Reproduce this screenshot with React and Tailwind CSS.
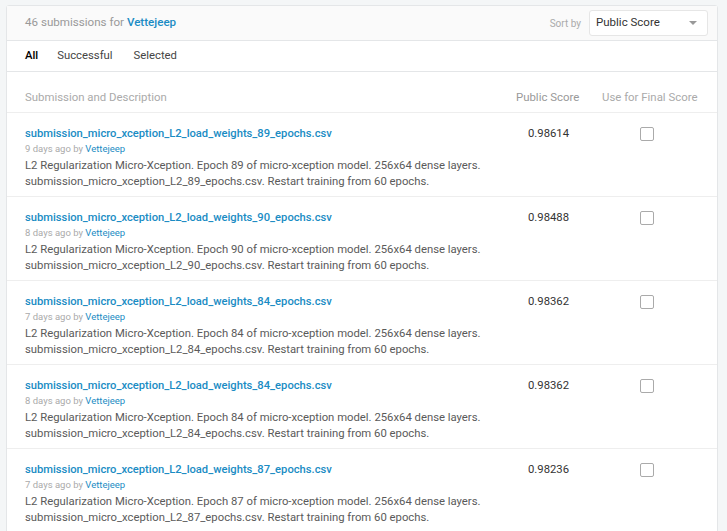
const rows = [
  { file: "submission_micro_xception_L2_load_weights_89_epochs.csv", ago: "9 days ago", epoch: 89, score: "0.98614" },
  { file: "submission_micro_xception_L2_load_weights_90_epochs.csv", ago: "8 days ago", epoch: 90, score: "0.98488" },
  { file: "submission_micro_xception_L2_load_weights_84_epochs.csv", ago: "7 days ago", epoch: 84, score: "0.98362" },
  { file: "submission_micro_xception_L2_load_weights_84_epochs.csv", ago: "8 days ago", epoch: 84, score: "0.98362" },
  { file: "submission_micro_xception_L2_load_weights_87_epochs.csv", ago: "7 days ago", epoch: 87, score: "0.98236" },
];

const App = () => {
  return (
    <div className="h-[531px] bg-[#f4f6f7] pt-[5px] pl-[6px] pr-[9px] font-['Roboto',sans-serif] overflow-hidden">
      <div className="bg-white border border-[#e4e6e8] rounded-t-[3px]">
        <div className="h-[35px] bg-[#fafafa] border-b border-[#e4e6e8] flex items-center justify-between pl-[18px] pr-[9px]">
          <div className="text-[11.6px] text-[#999] whitespace-nowrap">
            46 submissions for <span className="text-[#1a8cc4] font-medium">Vettejeep</span>
          </div>
          <div className="flex items-center gap-[8px]">
            <span className="text-[10px] text-[#aaa]">Sort by</span>
            <div className="w-[119px] h-[26px] bg-white border border-[#e6e6e6] rounded-[3px] flex items-center justify-between pl-[6px] pr-[10px]">
              <span className="text-[11.5px] text-[#333]">Public Score</span>
              <svg width="8" height="4" viewBox="0 0 8 4"><path d="M0 0h8L4 4z" fill="#999" /></svg>
            </div>
          </div>
        </div>
        <div className="h-[31px] border-b border-[#e4e6e8] flex items-center pl-[18px] text-[11.3px] text-[#444] whitespace-nowrap">
          <span className="text-black font-medium">All</span>
          <span className="ml-[19px]">Successful</span>
          <span className="ml-[21px]">Selected</span>
        </div>
        <div className="h-[41px] border-b border-[#eee] flex items-end pb-[6px] pl-[18px] text-[11.4px] text-[#aaa] whitespace-nowrap">
          <span className="flex-1">Submission and Description</span>
          <span className="w-[83px] text-[#999]">Public Score</span>
          <span className="w-[118px] pl-[3px]">Use for Final Score</span>
        </div>
        {rows.map((r, i) => (
          <div key={i} className="h-[84px] border-b border-[#eee] flex pl-[18px] pt-[14px]">
            <div className="flex-1 whitespace-nowrap">
              <div className="text-[11.2px] leading-[14px] font-medium text-[#1a8cc4]">{r.file}</div>
              <div className="text-[9.5px] leading-[13px] text-[#aaa] mt-[1px]">
                {r.ago} by <span className="text-[#1a8cc4]">Vettejeep</span>
              </div>
              <div className="text-[11.3px] leading-[16px] text-[#5a5a5a] mt-[3px]">
                L2 Regularization Micro-Xception. Epoch {r.epoch} of micro-xception model. 256x64 dense layers.
                <br />
                submission_micro_xception_L2_{r.epoch}_epochs.csv. Restart training from 60 epochs.
              </div>
            </div>
            <div className="w-[83px] text-[11.3px] leading-[14px] text-[#333] pl-[12px]">{r.score}</div>
            <div className="w-[118px] pl-[41px]">
              <div className="w-[14px] h-[14px] border border-[#aaa] rounded-[2px] bg-white" />
            </div>
          </div>
        ))}
      </div>
    </div>
  );
};

export default App;
